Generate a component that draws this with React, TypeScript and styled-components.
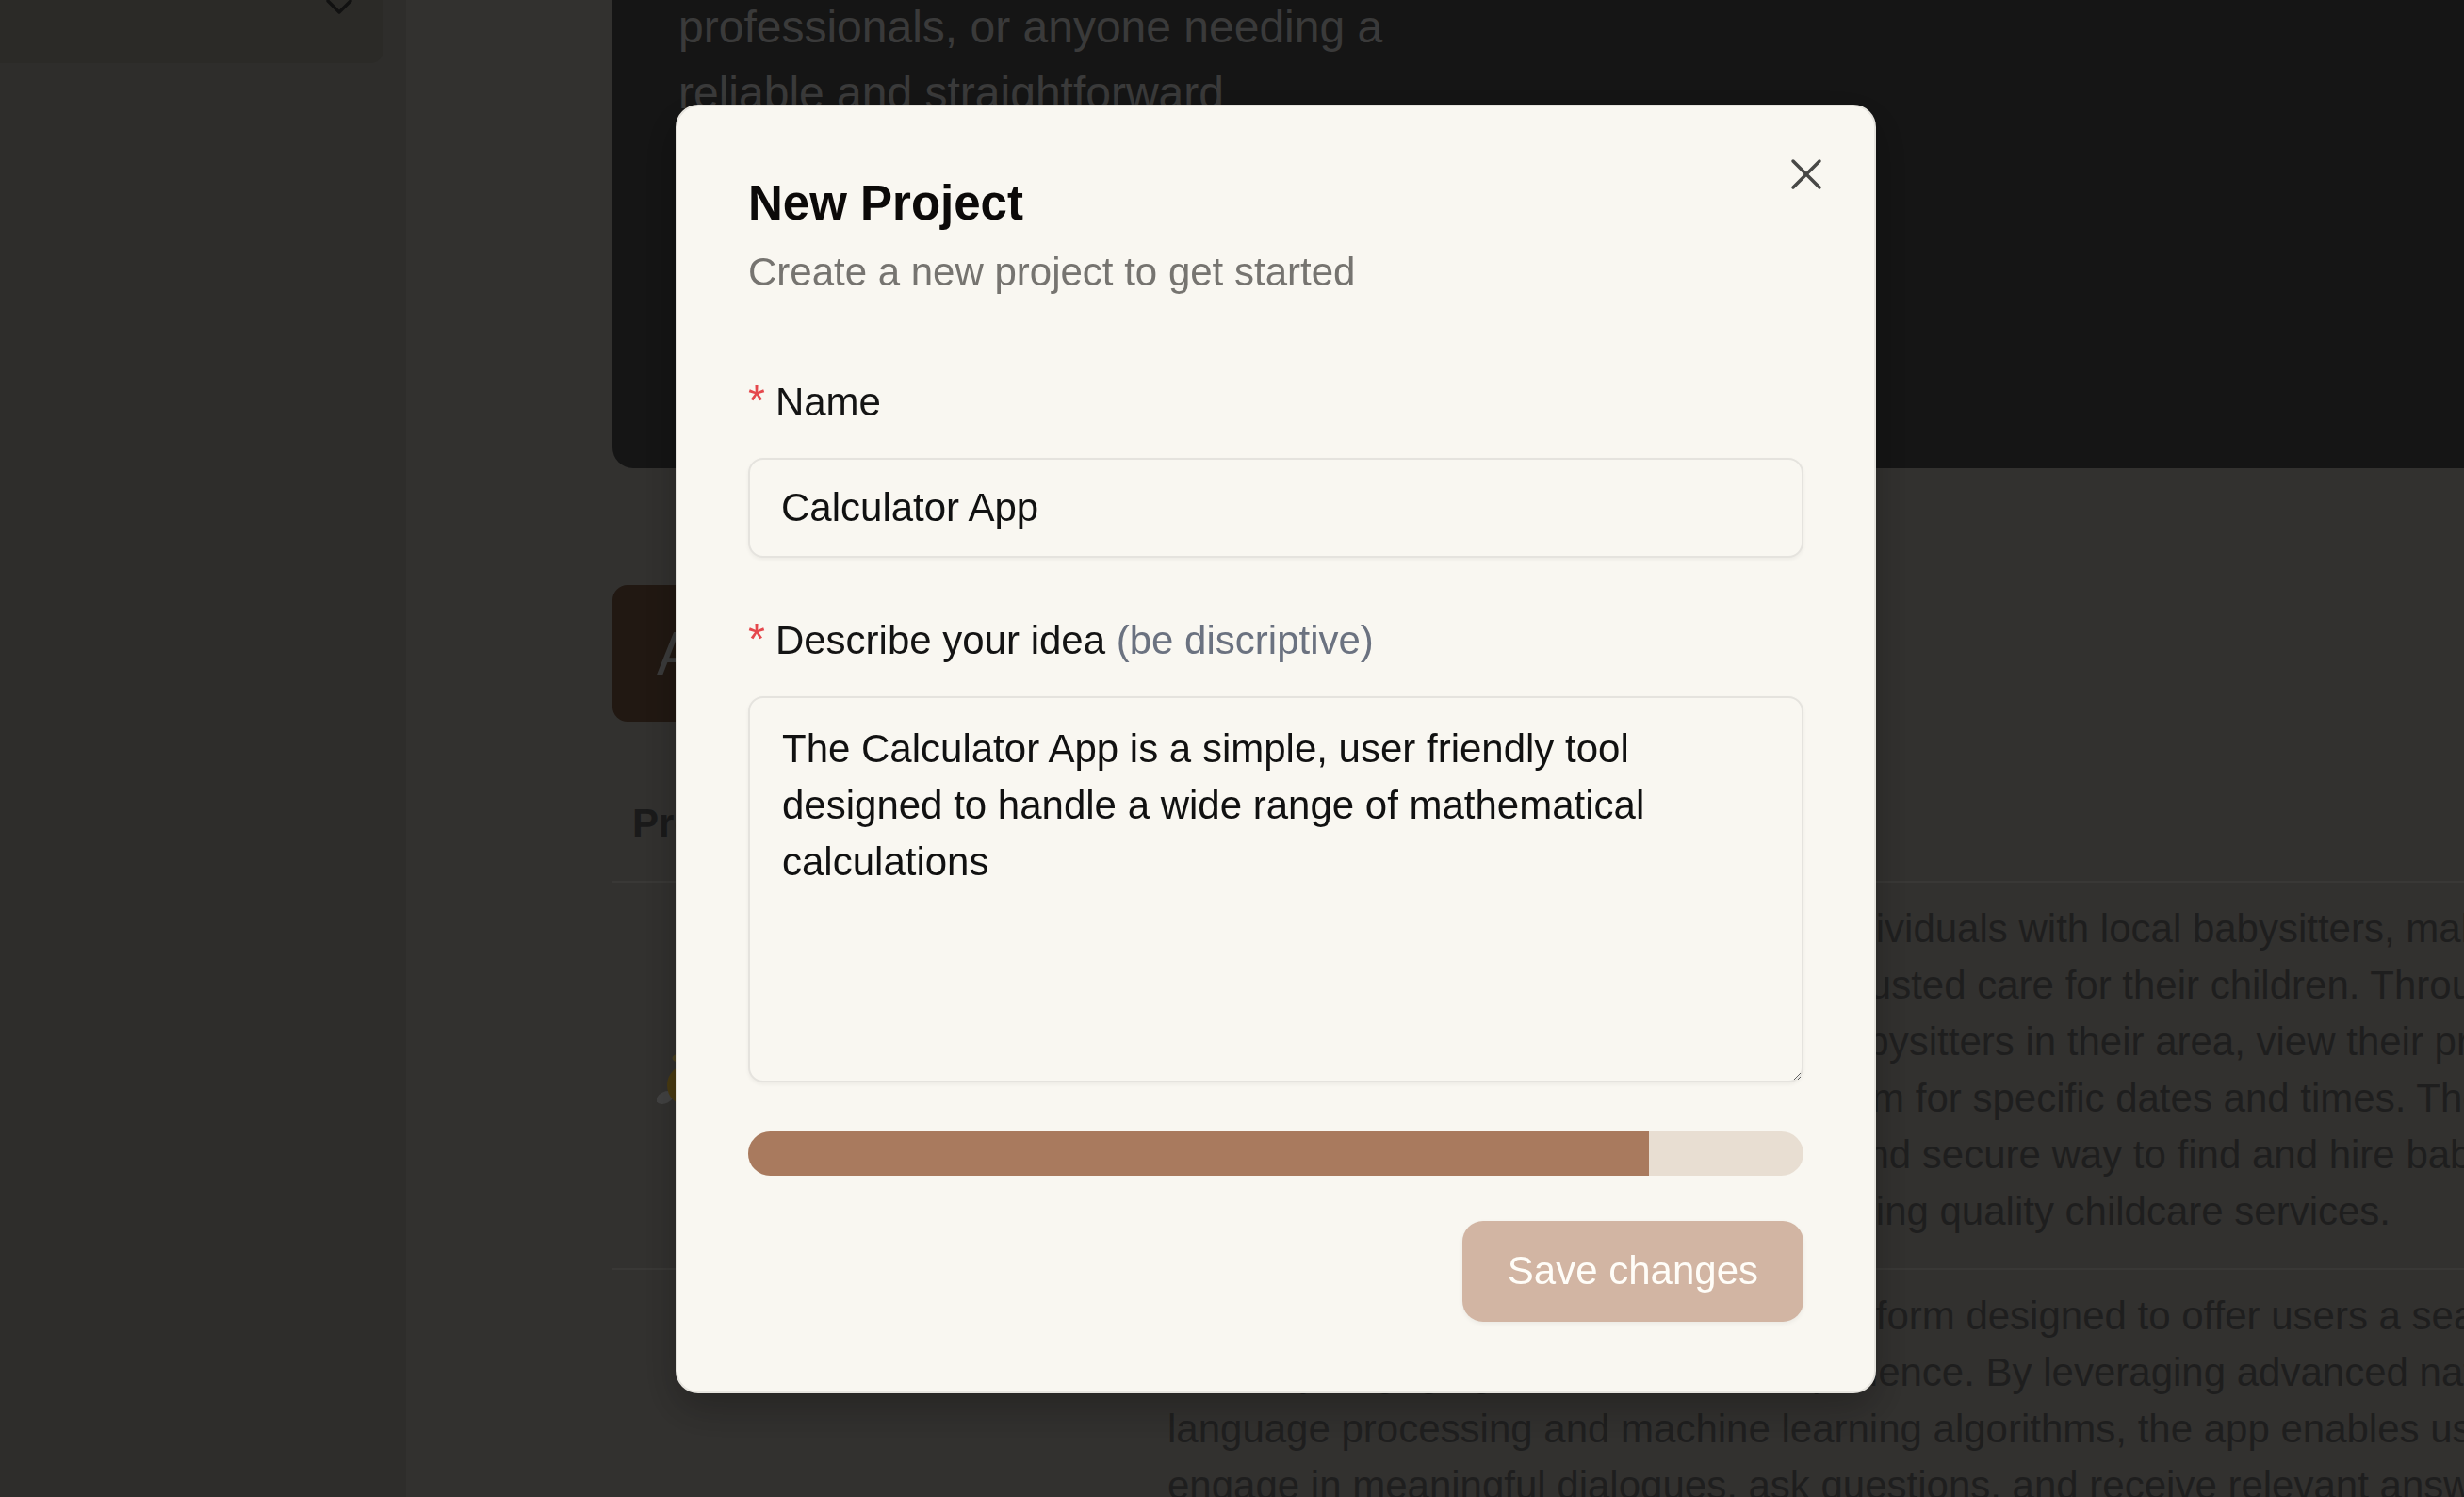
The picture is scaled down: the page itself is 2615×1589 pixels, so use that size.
import React from 'react';
import styled, { createGlobalStyle } from 'styled-components';
import { ChevronDown, X } from 'lucide-react';

// page colours sit under a 70% black backdrop, so they are lighter than they look
const GlobalStyle = createGlobalStyle`
  html, body {
    margin: 0;
    padding: 0;
  }
  body {
    background: #a7a39d;
    font-family: 'Liberation Sans', Arial, sans-serif;
    overflow: hidden;
  }
  * {
    box-sizing: border-box;
  }
`;

const Page = styled.div`
  display: grid;
  grid-template-columns: 431px 1fr;
  height: 100vh;
  overflow: hidden;
`;

const Sidebar = styled.aside`
  background: #99968f;
  padding-right: 24px;
`;

const ProjectSelect = styled.div`
  display: flex;
  justify-content: flex-end;
  align-items: flex-start;
  height: 167px;
  margin: -100px 0 0 -20px;
  padding: 83px 23px 0 0;
  border-radius: 14px;
  background: #8f8c82;
  color: #393939;
`;

const Main = styled.main`
  overflow: hidden;
  padding-left: 219px;
`;

const Content = styled.div`
  display: flex;
  flex-direction: column;
  align-items: flex-start;
  width: 2400px;
`;

const HeroCard = styled.section`
  align-self: stretch;
  height: 573px;
  margin-top: -76px;
  padding: 70px 0 0 70px;
  border-radius: 0 0 22px 22px;
  background: #464646;
`;

const HeroLine = styled.div`
  font-size: 48px;
  line-height: 70px;
  color: #c1c1c1;
  white-space: nowrap;
`;

const NewProjectButton = styled.button`
  height: 145px;
  margin-top: 124px;
  padding: 0 47px;
  border: 0;
  border-radius: 16px;
  background: #6e503c;
  color: #c4c4c4;
  font-family: inherit;
  font-size: 64px;
`;

const Table = styled.div`
  align-self: stretch;
  margin-top: 78px;
`;

const Row = styled.div<{ $head?: boolean }>`
  display: grid;
  grid-template-columns: 589px 1fr;
  align-items: center;
  padding: ${(p) => (p.$head ? '0 0 31px' : '19px 0 30px')};
  border-bottom: 2px solid #bebbb4;
`;

const HeadCell = styled.div<{ $first?: boolean }>`
  padding-left: ${(p) => (p.$first ? '21px' : '0')};
  font-size: 42px;
  font-weight: 700;
  line-height: 60px;
  color: #575757;
`;

const AvatarCell = styled.div`
  display: flex;
  padding: 20px 0 0 47px;
`;

const DescCell = styled.div`
  font-size: 42px;
  line-height: 60px;
  color: #676767;
`;

const DescLine = styled.div`
  white-space: nowrap;
`;

const Overlay = styled.div`
  position: fixed;
  inset: 0;
  display: flex;
  align-items: center;
  justify-content: center;
  padding-left: 93px;
  background: rgba(0, 0, 0, 0.7);
`;

const Dialog = styled.div`
  position: relative;
  display: flex;
  flex-direction: column;
  width: 1274px;
  padding: 77px 75px 74px;
  border: 2px solid #e6e4de;
  border-radius: 24px;
  background: #f9f7f1;
  box-shadow: 0 16px 40px rgba(0, 0, 0, 0.25);
`;

const CloseButton = styled.button`
  position: absolute;
  top: 44px;
  right: 44px;
  display: flex;
  align-items: center;
  justify-content: center;
  width: 56px;
  height: 56px;
  padding: 0;
  border: 0;
  background: transparent;
  color: #484846;
  cursor: pointer;
`;

const Title = styled.h2`
  margin: 0;
  font-size: 51px;
  font-weight: 700;
  line-height: 51px;
  color: #0c0a09;
`;

const Subtitle = styled.p`
  margin: 18px 0 0;
  font-size: 42px;
  line-height: 60px;
  color: #767470;
`;

const Form = styled.form`
  display: flex;
  flex-direction: column;
  gap: 58px;
  margin-top: 78px;
`;

const Field = styled.div`
  display: flex;
  flex-direction: column;
  gap: 29px;
`;

const Label = styled.label`
  font-size: 42px;
  line-height: 60px;
  color: #141414;
`;

const Required = styled.span`
  margin-right: 11px;
  font-size: 46px;
  line-height: 0;
  color: #e5484d;
`;

const Hint = styled.span`
  color: #6b7280;
`;

const fieldBase = `
  width: 100%;
  border: 2px solid #e5e3de;
  border-radius: 16px;
  background: #f9f7f1;
  box-shadow: 0 2px 4px rgba(0, 0, 0, 0.05);
  font-family: inherit;
  font-size: 42px;
  color: #111111;
  outline: none;
`;

const TextInput = styled.input`
  ${fieldBase}
  height: 106px;
  padding: 0 33px;
`;

const TextArea = styled.textarea`
  ${fieldBase}
  display: block;
  height: 410px;
  padding: 24px 34px;
  line-height: 60px;
  resize: vertical;
`;

const Progress = styled.div`
  height: 47px;
  margin-top: 52px;
  border-radius: 999px;
  background: #e8ded2;
  overflow: hidden;
`;

const ProgressFill = styled.div`
  height: 100%;
  background: #a97a5e;
`;

const Footer = styled.div`
  display: flex;
  justify-content: flex-end;
  margin-top: 48px;
`;

const SaveButton = styled.button`
  height: 107px;
  padding: 0 48px;
  border: 0;
  border-radius: 22px;
  background: #d2b5a3;
  box-shadow: 0 2px 5px rgba(0, 0, 0, 0.06);
  color: #fffdf8;
  font-family: inherit;
  font-size: 42px;
`;

const AngelIcon = () => (
  <svg width="62" height="62" viewBox="0 0 62 62">
    <ellipse cx="9" cy="50" rx="10" ry="6" fill="#dcdcdc" transform="rotate(-25 9 50)" />
    <circle cx="33" cy="37" r="22" fill="#f5c33b" />
    <circle cx="26" cy="36" r="2.5" fill="#3a2a10" />
    <ellipse cx="33" cy="8" rx="15" ry="4.5" fill="none" stroke="#f7d86a" strokeWidth="3" />
  </svg>
);

const RobotIcon = () => (
  <svg width="62" height="62" viewBox="0 0 62 62">
    <rect x="8" y="14" width="46" height="38" rx="10" fill="#9aa4b0" />
    <circle cx="23" cy="32" r="5" fill="#2f3a48" />
    <circle cx="39" cy="32" r="5" fill="#2f3a48" />
    <line x1="31" y1="4" x2="31" y2="14" stroke="#9aa4b0" strokeWidth="3" />
  </svg>
);

const heroLines = [
  'professionals, or anyone needing a',
  'reliable and straightforward',
  'calculator for everyday use.',
];

const projects = [
  {
    icon: <AngelIcon />,
    lines: [
      'The Babysitters Finder app connects individuals with local babysitters, making it easier for',
      'parents and guardians to get safe and trusted care for their children. Through',
      'the platform, users can browse listed babysitters in their area, view their profiles and',
      'experience, check reviews and book them for specific dates and times. The',
      'Platform provides clients a convenient and secure way to find and hire babysitters,',
      'and providing peace of mind while ensuring quality childcare services.',
    ],
  },
  {
    icon: <RobotIcon />,
    lines: [
      'ChatMax Assistant is an AI-powered platform designed to offer users a seamless',
      'and truly engaging conversational experience. By leveraging advanced natural',
      'language processing and machine learning algorithms, the app enables users to',
      'engage in meaningful dialogues, ask questions, and receive relevant answers',
      'in real time. Whether for work, study, or everyday curiosity, the assistant',
      'adapts to each user, remembers context, and provides clear, accurate',
      'responses across a wide range of topics, making information easier to',
      'access and conversations feel more natural and personal for',
      'everyone who uses it.',
    ],
  },
];

const description =
  'The Calculator App is a simple, user friendly tool designed to handle a wide range of mathematical calculations';

const progress = 0.854;

export default function App() {
  return (
    <>
      <GlobalStyle />
      <Page>
        <Sidebar>
          <ProjectSelect>
            <ChevronDown size={48} strokeWidth={1.7} />
          </ProjectSelect>
        </Sidebar>
        <Main>
          <Content>
            <HeroCard>
              {heroLines.map((line) => (
                <HeroLine key={line}>{line}</HeroLine>
              ))}
            </HeroCard>
            <NewProjectButton>Add New Project</NewProjectButton>
            <Table>
              <Row $head>
                <HeadCell $first>Project</HeadCell>
                <HeadCell>Description</HeadCell>
              </Row>
              {projects.map((project, i) => (
                <Row key={i}>
                  <AvatarCell>{project.icon}</AvatarCell>
                  <DescCell>
                    {project.lines.map((line) => (
                      <DescLine key={line}>{line}</DescLine>
                    ))}
                  </DescCell>
                </Row>
              ))}
            </Table>
          </Content>
        </Main>
      </Page>

      <Overlay>
        <Dialog>
          <CloseButton aria-label="Close">
            <X size={56} strokeWidth={1.5} />
          </CloseButton>
          <Title>New Project</Title>
          <Subtitle>Create a new project to get started</Subtitle>
          <Form onSubmit={(e) => e.preventDefault()}>
            <Field>
              <Label htmlFor="project-name">
                <Required>*</Required>Name
              </Label>
              <TextInput id="project-name" type="text" defaultValue="Calculator App" />
            </Field>
            <Field>
              <Label htmlFor="project-idea">
                <Required>*</Required>Describe your idea <Hint>(be discriptive)</Hint>
              </Label>
              <TextArea id="project-idea" defaultValue={description} />
            </Field>
          </Form>
          <Progress>
            <ProgressFill style={{ width: `${progress * 100}%` }} />
          </Progress>
          <Footer>
            <SaveButton type="button">Save changes</SaveButton>
          </Footer>
        </Dialog>
      </Overlay>
    </>
  );
}
